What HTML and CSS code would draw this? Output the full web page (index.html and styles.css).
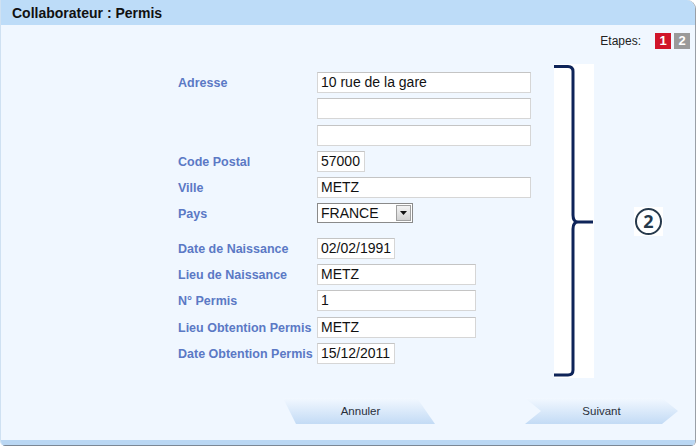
FILE: index.html
```html
<!DOCTYPE html>
<html lang="fr">
<head>
<meta charset="utf-8">
<title>Collaborateur : Permis</title>
<link rel="stylesheet" href="styles.css">
</head>
<body>
<div class="dialog">
  <div class="header">Collaborateur : Permis</div>
  <div class="content">
    <div class="steps">
      <span class="steps-label">Etapes:</span>
      <span class="badge badge-active">1</span>
      <span class="badge badge-idle">2</span>
    </div>
    <div class="main">
      <div class="form">
        <label class="lbl">Adresse</label>
        <div class="field"><span class="input w-long">10 rue de la gare</span></div>
        <span class="lbl"></span>
        <div class="field"><span class="input w-long"></span></div>
        <span class="lbl"></span>
        <div class="field"><span class="input w-long"></span></div>
        <label class="lbl">Code Postal</label>
        <div class="field"><span class="input w-cp">57000</span></div>
        <label class="lbl">Ville</label>
        <div class="field"><span class="input w-long">METZ</span></div>
        <label class="lbl">Pays</label>
        <div class="field"><span class="select"><span class="select-text">FRANCE</span><span class="select-btn"><svg width="7" height="4" viewBox="0 0 7 4"><path d="M0 0H7L3.5 4Z" fill="#111"/></svg></span></span></div>
        <label class="lbl gap-top">Date de Naissance</label>
        <div class="field gap-top"><span class="input w-date">02/02/1991</span></div>
        <label class="lbl">Lieu de Naissance</label>
        <div class="field"><span class="input w-mid">METZ</span></div>
        <label class="lbl">N° Permis</label>
        <div class="field"><span class="input w-mid">1</span></div>
        <label class="lbl">Lieu Obtention Permis</label>
        <div class="field"><span class="input w-mid">METZ</span></div>
        <label class="lbl">Date Obtention Permis</label>
        <div class="field"><span class="input w-date">15/12/2011</span></div>
      </div>
      <div class="bracket">
        <svg width="40" height="314" viewBox="0 0 40 314">
          <rect x="0" y="0" width="40" height="314" fill="#ffffff"/>
          <path d="M0 2.5H14Q19 2.5 19 7.5V151Q19 158 24 158H39M24 158Q19 158 19 165V306Q19 311 14 311H0" fill="none" stroke="#0e2459" stroke-width="3"/>
        </svg>
      </div>
      <div class="circle-wrap"><span class="circle">2</span></div>
    </div>
    <div class="actions">
      <button class="btn btn-cancel">Annuler</button>
      <button class="btn btn-next">Suivant</button>
    </div>
  </div>
  <div class="footer"></div>
</div>
</body>
</html>
```
FILE: styles.css
```css
html, body {
  margin: 0;
  padding: 0;
  background: #ffffff;
}
body {
  font-family: "Liberation Sans", Arial, sans-serif;
  width: 699px;
  height: 446px;
  overflow: hidden;
}
.dialog {
  width: 696px;
  height: 446px;
  display: flex;
  flex-direction: column;
  background: #f0f7ff;
  border-right: 1px solid #9a9fa6;
  border-left: 1px solid #cfe1f2;
  box-sizing: border-box;
  border-top-right-radius: 9px;
  border-bottom-left-radius: 5px;
  border-bottom-right-radius: 5px;
  overflow: hidden;
}
.header {
  height: 25px;
  flex: none;
  background: #bddcf8;
  font-weight: bold;
  font-size: 14px;
  color: #111;
  padding-left: 11px;
  line-height: 27px;
  box-sizing: border-box;
}
.content {
  flex: 1;
  display: flex;
  flex-direction: column;
  padding-top: 8px;
}
.steps {
  display: flex;
  justify-content: flex-end;
  align-items: center;
  height: 16px;
  padding-right: 5px;
}
.steps-label {
  font-size: 12px;
  color: #222;
  margin-right: 14px;
}
.badge {
  width: 16px;
  height: 16px;
  color: #fff;
  font-weight: bold;
  font-size: 13px;
  line-height: 16px;
  text-align: center;
}
.badge-active {
  background: #d0152a;
  margin-right: 3px;
}
.badge-idle {
  background: #9a9a9a;
}
.main {
  display: flex;
  align-items: flex-start;
  margin-top: 15px;
  padding-left: 177px;
}
.form {
  display: grid;
  grid-template-columns: 139px 214px;
  row-gap: 5.3px;
  padding-top: 8px;
}
.lbl {
  font-size: 12.5px;
  font-weight: bold;
  color: #5b79c5;
  display: flex;
  align-items: center;
  padding-top: 1px;
  white-space: nowrap;
}
.field {
  display: flex;
  align-items: center;
}
.gap-top {
  margin-top: 9px;
}
.input {
  display: block;
  height: 21px;
  box-sizing: border-box;
  background: #ffffff;
  border: 1px solid #d6d6d6;
  border-top-color: #c4c4c4;
  font-size: 14px;
  line-height: 19px;
  color: #111;
  padding-left: 3px;
  white-space: nowrap;
}
.w-long { width: 214px; }
.w-cp { width: 48px; }
.w-date { width: 78px; }
.w-mid { width: 159px; }
.select {
  display: flex;
  align-items: center;
  width: 96px;
  height: 20px;
  box-sizing: border-box;
  border: 1px solid #8a8a8a;
  background: #ffffff;
}
.select-text {
  flex: 1;
  font-size: 14px;
  color: #111;
  padding-left: 3px;
  line-height: 18px;
}
.select-btn {
  width: 15px;
  height: 16px;
  margin-right: 1px;
  box-sizing: border-box;
  border: 1px solid #a0a0a0;
  background: linear-gradient(#f4f4f4, #d2d2d2);
  display: flex;
  align-items: center;
  justify-content: center;
}
.bracket {
  margin-left: 23px;
  width: 40px;
  height: 314px;
}
.bracket svg {
  display: block;
}
.circle-wrap {
  align-self: center;
  margin-left: 40px;
  width: 29px;
  height: 29px;
  background: #ffffff;
  display: flex;
  align-items: center;
  justify-content: center;
}
.circle {
  width: 23px;
  height: 23px;
  border: 2px solid #26394c;
  border-radius: 50%;
  display: flex;
  align-items: center;
  justify-content: center;
  font-size: 18px;
  font-weight: bold;
  color: #26394c;
  font-family: "Open Sans", "Liberation Sans", sans-serif;
  line-height: 1;
}
.actions {
  display: flex;
  margin-top: 20px;
  padding-left: 282px;
  gap: 90px;
}
.btn {
  border: none;
  height: 26px;
  font-family: "Liberation Sans", Arial, sans-serif;
  font-size: 11.5px;
  color: #2a2f3a;
  background: linear-gradient(#f2f8ff, #c3dbf5);
  padding: 0;
  cursor: pointer;
}
.btn-cancel {
  width: 152px;
  clip-path: polygon(0 0, 134px 0, 152px 100%, 13px 100%);
  padding-left: 3px;
}
.btn-next {
  width: 153px;
  clip-path: polygon(0 0, 137px 0, 153px 50%, 137px 100%, 0 100%, 16px 50%);
}
.footer {
  flex: none;
  height: 6px;
  background: #bad7f3;
  border-bottom: 1px solid #7b8794;
  box-sizing: border-box;
}
```
